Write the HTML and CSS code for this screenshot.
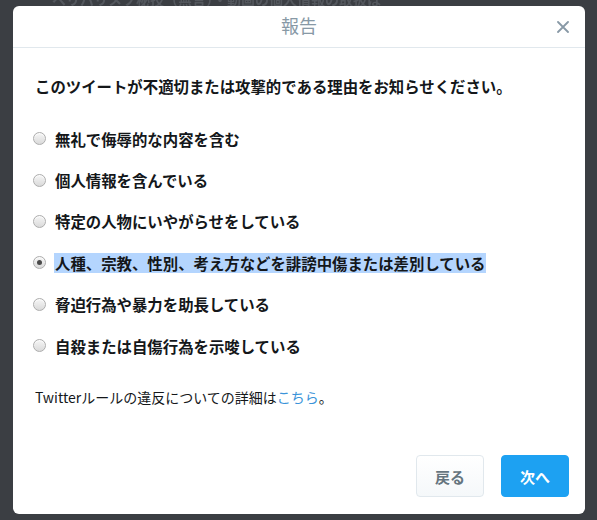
FILE: index.html
```html
<!DOCTYPE html>
<html lang="ja">
<head>
<meta charset="utf-8">
<title>報告</title>
<link rel="stylesheet" href="styles.css">
</head>
<body>
<div class="backdrop">
  <div class="page-peek page-peek-top">ペリバリメソ秘技（無言）・動画の個人情報の取扱は</div>
  <div class="dialog">
    <div class="dialog-header">
      <h1 class="dialog-title">報告</h1>
      <button class="dialog-close" aria-label="閉じる">
        <svg width="12" height="12" viewBox="0 0 12 12"><path d="M1 1 L11 11 M11 1 L1 11" stroke="#8899a6" stroke-width="1.8" stroke-linecap="round"/></svg>
      </button>
    </div>
    <div class="dialog-body">
      <p class="question">このツイートが不適切または攻撃的である理由をお知らせください。</p>
      <ul class="options">
        <li class="option"><span class="radio"></span><span class="option-label">無礼で侮辱的な内容を含む</span></li>
        <li class="option"><span class="radio"></span><span class="option-label">個人情報を含んでいる</span></li>
        <li class="option"><span class="radio"></span><span class="option-label">特定の人物にいやがらせをしている</span></li>
        <li class="option"><span class="radio radio-checked"></span><span class="option-label option-selected">人種、宗教、性別、考え方などを誹謗中傷または差別している</span></li>
        <li class="option"><span class="radio"></span><span class="option-label">脅迫行為や暴力を助長している</span></li>
        <li class="option"><span class="radio"></span><span class="option-label">自殺または自傷行為を示唆している</span></li>
      </ul>
      <p class="rules">Twitterルールの違反についての詳細は<a class="rules-link" href="#">こちら</a>。</p>
    </div>
    <div class="dialog-footer">
      <button class="btn btn-back">戻る</button>
      <button class="btn btn-next">次へ</button>
    </div>
  </div>
</div>
</body>
</html>
```

FILE: styles.css
```css
html, body {
  margin: 0;
  padding: 0;
}

body {
  width: 597px;
  height: 520px;
  overflow: hidden;
  background: #3b3e43;
  font-family: "Noto Sans CJK JP", "Noto Sans", sans-serif;
}

.backdrop {
  position: relative;
  width: 597px;
  height: 520px;
  padding: 6px 0 0 13px;
  box-sizing: border-box;
}

/* page content showing above the dialog, dimmed by the overlay */
.page-peek {
  position: absolute;
  color: #53575d;
  font-size: 14px;
  line-height: 16px;
  font-weight: 700;
  white-space: nowrap;
  filter: blur(0.6px);
}

.page-peek-top {
  left: 52px;
  top: -9px;
}

.dialog {
  position: relative;
  width: 572px;
  height: 508px;
  background: #ffffff;
  border-radius: 6px;
  display: flex;
  flex-direction: column;
}

.dialog-header {
  position: relative;
  height: 38px;
  padding-bottom: 3px;
  border-bottom: 1px solid #e1e8ed;
  display: flex;
  align-items: center;
  justify-content: center;
}

.dialog-title {
  margin: 0;
  font-size: 18px;
  font-weight: 400;
  color: #8899a6;
  line-height: 24px;
}

.dialog-close {
  position: absolute;
  right: 15px;
  top: 14px;
  width: 14px;
  height: 14px;
  padding: 0;
  border: 0;
  background: none;
  display: flex;
  align-items: center;
  justify-content: center;
}

.dialog-body {
  padding: 0 22px;
  flex: 1;
}

.question {
  margin: 28px 0 0;
  font-size: 15.4px;
  line-height: 20px;
  font-weight: 700;
  color: #14171a;
}

.options {
  list-style: none;
  margin: 22px 0 0;
  padding: 0;
}

.option {
  height: 41.4px;
  display: flex;
  align-items: center;
}

.radio {
  width: 11px;
  height: 11px;
  margin-left: -2px;
  border-radius: 50%;
  border: 1px solid #adadad;
  background: linear-gradient(#f6f6f6, #dadada);
  box-shadow: inset 0 1px 1px rgba(255, 255, 255, 0.8);
  display: flex;
  align-items: center;
  justify-content: center;
  flex-shrink: 0;
}

.radio-checked::after {
  content: "";
  width: 5px;
  height: 5px;
  border-radius: 50%;
  background: #4a4a4a;
}

.option-label {
  margin-left: 9px;
  font-size: 15.4px;
  line-height: 20px;
  font-weight: 700;
  color: #14171a;
}

.option-selected {
  background: #b4d5fe;
  padding: 0 1px;
  margin-left: 8px;
}

.rules {
  margin: 21px 0 0;
  font-size: 14px;
  line-height: 20px;
  color: #14171a;
}

.rules-link {
  color: #3b94d9;
  text-decoration: none;
}

.dialog-footer {
  display: flex;
  justify-content: flex-end;
  gap: 17px;
  padding: 0 16px 17px 0;
}

.btn {
  width: 68px;
  height: 42px;
  border-radius: 4px;
  font-family: "Noto Sans CJK JP", "Noto Sans", sans-serif;
  font-size: 15px;
  font-weight: 700;
  cursor: pointer;
}

.btn-back {
  background: linear-gradient(#ffffff, #f5f8fa);
  border: 1px solid #e1e8ed;
  color: #66757f;
}

.btn-next {
  background: #1da1f2;
  border: 1px solid #1da1f2;
  color: #ffffff;
}
```
